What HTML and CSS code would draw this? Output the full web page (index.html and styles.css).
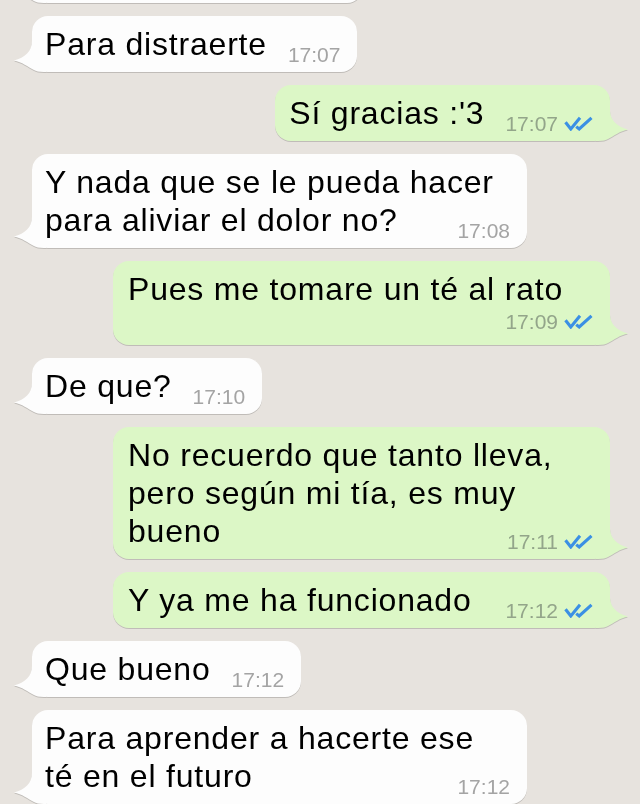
FILE: index.html
```html
<!DOCTYPE html>
<html lang="es">
<head>
<meta charset="utf-8">
<title>Chat</title>
<link rel="stylesheet" href="styles.css">
</head>
<body>
<svg class="defs" width="0" height="0" aria-hidden="true">
  <defs>
    <symbol id="tail" viewBox="0 0 32 32">
      <path d="M18 0 L18 1 C18 11 11 18 0 20.5 C8 22 14 27 20 30 C22 31 25 32 30 32 L32 32 L32 0 Z" fill="currentColor"/>
    </symbol>
    <symbol id="ticks" viewBox="0 0 29 15">
      <polyline points="1.5,6.3 6.8,13 16,1.8" fill="none" stroke="currentColor" stroke-width="3.1"/>
      <polyline points="12.2,10.6 15.2,13 27.5,1.8" fill="none" stroke="currentColor" stroke-width="3.1"/>
    </symbol>
  </defs>
</svg>

<div class="chat">
  <div class="msg in">
    <div class="bubble clipped"><svg class="tail"><use href="#tail"/></svg></div>
  </div>

  <div class="msg in">
    <div class="bubble">
      <div class="line last"><span>Para distraerte</span><span class="meta"><span class="time">17:07</span></span></div>
      <svg class="tail"><use href="#tail"/></svg>
    </div>
  </div>

  <div class="msg out">
    <div class="bubble">
      <div class="line last"><span>Sí gracias :'3</span><span class="meta"><span class="time">17:07</span><svg class="ticks"><use href="#ticks"/></svg></span></div>
      <svg class="tail"><use href="#tail"/></svg>
    </div>
  </div>

  <div class="msg in">
    <div class="bubble wide">
      <div class="line">Y nada que se le pueda hacer</div>
      <div class="line last"><span>para aliviar el dolor no?</span><span class="meta"><span class="time">17:08</span></span></div>
      <svg class="tail"><use href="#tail"/></svg>
    </div>
  </div>

  <div class="msg out">
    <div class="bubble wide">
      <div class="line">Pues me tomare un té al rato</div>
      <div class="meta-row"><span class="meta"><span class="time">17:09</span><svg class="ticks"><use href="#ticks"/></svg></span></div>
      <svg class="tail"><use href="#tail"/></svg>
    </div>
  </div>

  <div class="msg in">
    <div class="bubble">
      <div class="line last"><span>De que?</span><span class="meta"><span class="time">17:10</span></span></div>
      <svg class="tail"><use href="#tail"/></svg>
    </div>
  </div>

  <div class="msg out">
    <div class="bubble wide">
      <div class="line">No recuerdo que tanto lleva,</div>
      <div class="line">pero según mi tía, es muy</div>
      <div class="line last"><span>bueno</span><span class="meta"><span class="time">17:11</span><svg class="ticks"><use href="#ticks"/></svg></span></div>
      <svg class="tail"><use href="#tail"/></svg>
    </div>
  </div>

  <div class="msg out">
    <div class="bubble wide">
      <div class="line last"><span>Y ya me ha funcionado</span><span class="meta"><span class="time">17:12</span><svg class="ticks"><use href="#ticks"/></svg></span></div>
      <svg class="tail"><use href="#tail"/></svg>
    </div>
  </div>

  <div class="msg in">
    <div class="bubble">
      <div class="line last"><span>Que bueno</span><span class="meta"><span class="time">17:12</span></span></div>
      <svg class="tail"><use href="#tail"/></svg>
    </div>
  </div>

  <div class="msg in">
    <div class="bubble wide">
      <div class="line">Para aprender a hacerte ese</div>
      <div class="line last"><span>té en el futuro</span><span class="meta"><span class="time">17:12</span></span></div>
      <svg class="tail"><use href="#tail"/></svg>
    </div>
  </div>
</div>
</body>
</html>
```

FILE: styles.css
```css
html, body {
  margin: 0;
  padding: 0;
}

body {
  background: #e7e3de;
  font-family: "Liberation Sans", Arial, sans-serif;
  overflow: hidden;
  height: 804px;
}

.defs {
  position: absolute;
  width: 0;
  height: 0;
}

.chat {
  display: flex;
  flex-direction: column;
  gap: 13px;
  padding: 0 30px 0 32px;
  margin-top: -37px;
}

.msg {
  display: flex;
  filter: drop-shadow(0 1px 0.6px rgba(0, 0, 0, 0.17));
}

.msg.in {
  justify-content: flex-start;
}

.msg.out {
  justify-content: flex-end;
}

.bubble {
  position: relative;
  box-sizing: border-box;
  max-width: 497px;
  border-radius: 16px;
  padding: 9px 17px 9px 13px;
}

.in .bubble {
  background: #fdfdfd;
}

.out .bubble {
  background: #dcf7c6;
  padding-left: 14px;
}

.bubble.wide {
  width: 495px;
}

.out .bubble.wide {
  width: 497px;
  padding-left: 15px;
}

.bubble.clipped {
  width: 331px;
  height: 40px;
}

.line {
  font-size: 32px;
  letter-spacing: 0.8px;
  line-height: 38px;
  height: 38px;
  white-space: nowrap;
  color: #000;
}

.line.last {
  display: flex;
  align-items: flex-end;
}

.line.last .meta {
  margin-left: auto;
  padding-left: 21px;
  margin-bottom: -4px;
}

.meta {
  display: inline-flex;
  align-items: baseline;
  font-size: 21px;
  letter-spacing: 0;
  line-height: 24px;
  white-space: nowrap;
  color: #a4a4a4;
}

.out .meta {
  color: #93a58a;
}

.meta-row {
  display: flex;
  justify-content: flex-end;
  align-items: center;
  height: 28px;
}

.ticks {
  width: 29px;
  height: 15px;
  margin-left: 6px;
  color: #3b90e4;
}

.tail {
  position: absolute;
  bottom: 0;
  width: 32px;
  height: 32px;
}

.in .tail {
  left: -18px;
  color: #fdfdfd;
}

.out .tail {
  right: -18px;
  transform: scaleX(-1);
  color: #dcf7c6;
}
```
